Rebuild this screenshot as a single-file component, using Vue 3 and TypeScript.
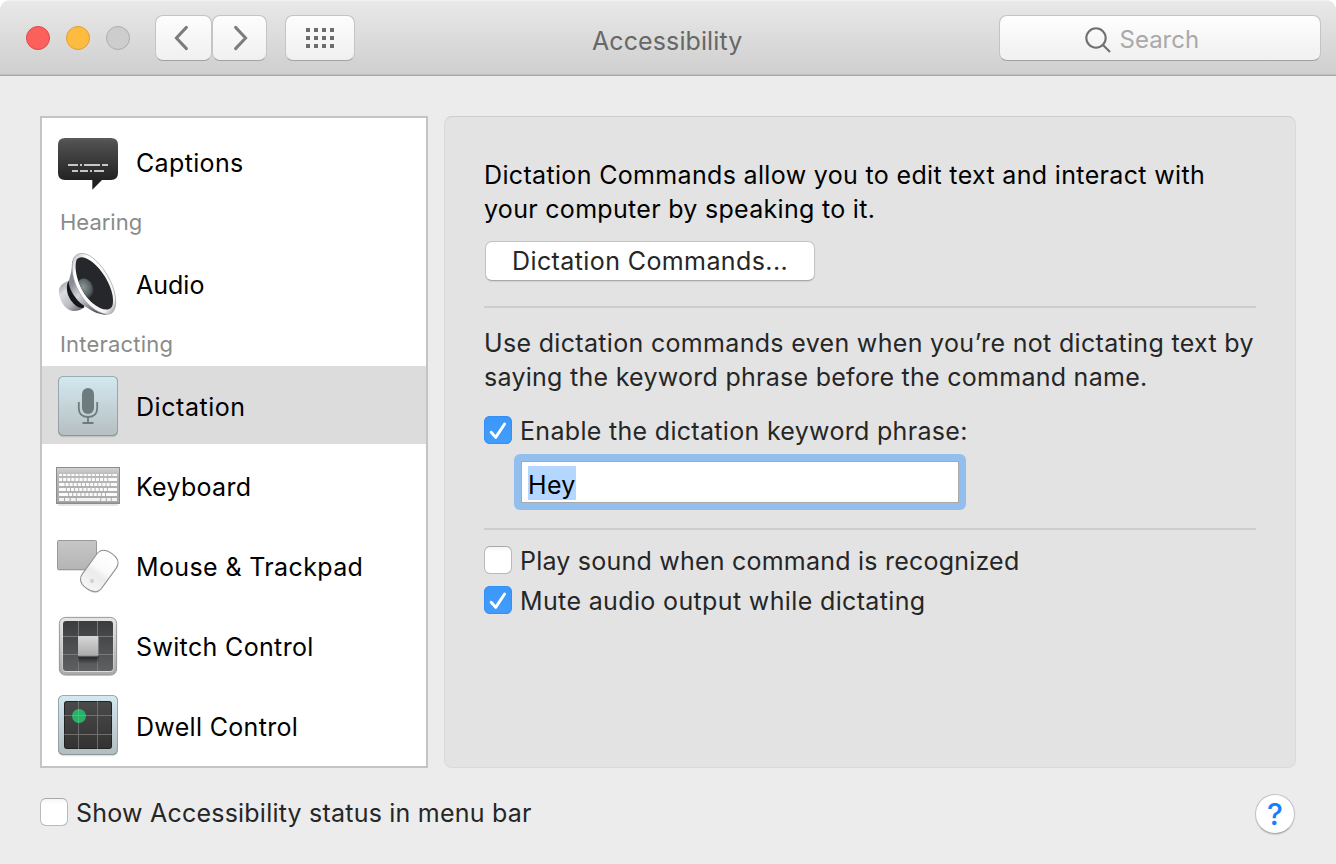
<script setup lang="ts">
import { ref } from 'vue'

interface SidebarRow {
  id: string
  label: string
  header?: boolean
}

const rows: SidebarRow[] = [
  { id: 'captions', label: 'Captions' },
  { id: 'hearing', label: 'Hearing', header: true },
  { id: 'audio', label: 'Audio' },
  { id: 'interacting', label: 'Interacting', header: true },
  { id: 'dictation', label: 'Dictation' },
  { id: 'keyboard', label: 'Keyboard' },
  { id: 'mouse', label: 'Mouse & Trackpad' },
  { id: 'switch', label: 'Switch Control' },
  { id: 'dwell', label: 'Dwell Control' },
]

const selected = ref('dictation')
const keywordEnabled = ref(true)
const playSound = ref(false)
const muteAudio = ref(true)
const showStatus = ref(false)

// Keyboard icon rows: lead widens the first key, the last key runs to the right edge
const keyRows = [
  { y: 28, h: 2, count: 14, lead: 0 },
  { y: 32, h: 3, count: 13, lead: 0 },
  { y: 37, h: 3, count: 13, lead: 2.4 },
  { y: 42, h: 3, count: 12, lead: 3.8 },
  { y: 47, h: 3, count: 11, lead: 6 },
]

const keys = keyRows.flatMap((r) => {
  const out: { x: number; y: number; w: number; h: number }[] = []
  let x = 3
  for (let i = 0; i < r.count; i++) {
    const w = i === 0 ? 3.1 + r.lead : i === r.count - 1 ? 61 - x : 3.1
    out.push({ x, y: r.y, w, h: r.h })
    x += w + 1
  }
  return out
})

const bottomKeys = [
  [3, 5], [9, 4.5], [14.7, 5], [20.7, 23.5], [45.2, 4.6], [50.8, 4], [55.8, 5.2],
].map(([x, w]) => ({ x, y: 52, w, h: 3 }))
</script>

<template>
  <div class="window">
    <header class="titlebar">
      <div class="lights">
        <span class="light red"></span>
        <span class="light yellow"></span>
        <span class="light gray"></span>
      </div>
      <div class="nav">
        <button class="tool back" aria-label="Back">
          <svg width="16" height="26" viewBox="0 0 16 26"><path d="M13.4 2.4 3.4 13l10 10.6" /></svg>
        </button>
        <button class="tool forward" aria-label="Forward">
          <svg width="16" height="26" viewBox="0 0 16 26"><path d="M2.6 2.4 12.6 13l-10 10.6" /></svg>
        </button>
      </div>
      <button class="tool all" aria-label="Show All">
        <svg width="28" height="20" viewBox="0 0 28 20">
          <template v-for="r in 3" :key="r">
            <rect v-for="c in 4" :key="c" :x="(c - 1) * 8" :y="(r - 1) * 8" width="4" height="4" />
          </template>
        </svg>
      </button>
      <h1 class="title">Accessibility</h1>
      <div class="search">
        <svg width="28" height="28" viewBox="0 0 28 28">
          <circle cx="12" cy="12" r="9.7" />
          <path d="M19 19l7 7" />
        </svg>
        <span>Search</span>
      </div>
    </header>

    <main class="body">
      <nav class="sidebar">
        <template v-for="row in rows" :key="row.id">
          <div v-if="row.header" class="group" :class="row.id">{{ row.label }}</div>
          <div v-else class="item" :class="[row.id, { selected: selected === row.id }]" @click="selected = row.id">
            <svg class="icon" width="64" height="78" viewBox="0 0 64 78">
              <g v-if="row.id === 'captions'">
                <defs>
                  <linearGradient id="cap" x1="0" y1="0" x2="0" y2="1">
                    <stop offset="0" stop-color="#5c5c5c" />
                    <stop offset="0.08" stop-color="#505050" />
                    <stop offset="0.8" stop-color="#232323" />
                    <stop offset="1" stop-color="#1b1b1b" />
                  </linearGradient>
                </defs>
                <path fill="url(#cap)" d="M9 16h46q7 0 7 7v28q0 7-7 7h-9L36.3 67.8V58H9q-7 0-7-7V23q0-7 7-7z" />
                <path
                  stroke="#c6c8c6" stroke-width="2" fill="none"
                  d="M12 43h10M24 43h2M28 43h16M46 43h6M16 49h6M24 49h8M34 49h2M38 49h10"
                />
              </g>
              <g v-else-if="row.id === 'audio'">
                <defs>
                  <linearGradient id="magnet" x1="0" y1="0" x2="0.7" y2="1">
                    <stop offset="0" stop-color="#8e8e96" />
                    <stop offset="0.35" stop-color="#dcdce2" />
                    <stop offset="0.75" stop-color="#b9b9c2" />
                    <stop offset="1" stop-color="#74747c" />
                  </linearGradient>
                  <linearGradient id="horn" x1="0.1" y1="0.4" x2="0.6" y2="1">
                    <stop offset="0" stop-color="#8a8a92" />
                    <stop offset="0.35" stop-color="#d4d4dc" />
                    <stop offset="0.65" stop-color="#a2a2ad" />
                    <stop offset="1" stop-color="#55555d" />
                  </linearGradient>
                  <linearGradient id="rim" x1="0" y1="0" x2="1" y2="1">
                    <stop offset="0" stop-color="#b8b8bd" />
                    <stop offset="0.2" stop-color="#ffffff" />
                    <stop offset="0.85" stop-color="#f4f4f6" />
                    <stop offset="1" stop-color="#8f8f95" />
                  </linearGradient>
                  <radialGradient id="dome" cx="0.45" cy="0.4" r="0.6">
                    <stop offset="0" stop-color="#8b9596" />
                    <stop offset="0.7" stop-color="#5b6365" />
                    <stop offset="1" stop-color="#34383b" />
                  </radialGradient>
                  <clipPath id="well">
                    <path d="M20.5 16C24 10.300 34 14 43 24.500C52 35 58.600 50 56.800 60C55.400 68 46 67 37 59.500C25 49.500 16.800 28 20.500 16z" />
                  </clipPath>
                </defs>
                <path fill="url(#magnet)" d="M13 36.800C6 39 2.500 43 3 48.500C3.600 56 8 64.500 15.500 66.800C20 67.700 25.500 66 28.500 63z" />
                <path fill="#17171a" d="M12.400 37C9.600 42 10.500 50 15 56.500C18.500 61.500 23 64.500 27.800 63.800L30 56L18 36z" />
                <path fill="url(#horn)" d="M16.500 17C16 26 14.500 31.500 12.600 37.500C13 46 20 56 27 61C34 66 41.500 70.500 50 70.800L54 66L24 20z" />
                <path
                  fill="url(#rim)" stroke="#8d8d94" stroke-width="0.6"
                  d="M17 16C19.500 8 28 8 34.500 12.300C47 20.500 60 41.500 59.700 58.500C59.300 69.800 53.500 72 45.500 69C26 61.500 12.500 34 17 16z"
                />
                <path fill="#26272a" d="M20.5 16C24 10.300 34 14 43 24.500C52 35 58.600 50 56.800 60C55.400 68 46 67 37 59.500C25 49.500 16.800 28 20.500 16z" />
                <g clip-path="url(#well)">
                  <ellipse cx="29" cy="44.5" rx="8.2" ry="10.200" transform="rotate(-24 29 44.5)" fill="url(#dome)" />
                </g>
              </g>
              <g v-else-if="row.id === 'dictation'">
                <defs>
                  <linearGradient id="dic" x1="0" y1="0" x2="0" y2="1">
                    <stop offset="0" stop-color="#d3e8f0" />
                    <stop offset="1" stop-color="#b6bfc1" />
                  </linearGradient>
                </defs>
                <rect x="2" y="11.3" width="60" height="60" rx="5.5" fill="#000" opacity="0.12" />
                <rect x="2" y="10" width="60" height="60" rx="5.5" fill="#8b979c" />
                <rect x="2.8" y="10.8" width="58.4" height="58.2" rx="4.8" fill="url(#dic)" />
                <rect x="26" y="22" width="12" height="26" rx="6" fill="#6e7b7e" />
                <path d="M22.8 36v6q0 9 9.2 9t9.2-9v-6M32 51v6M26.5 57h11" fill="none" stroke="#6e7b7e" stroke-width="1.8" />
              </g>
              <g v-else-if="row.id === 'keyboard'">
                <defs>
                  <linearGradient id="kbd" x1="0" y1="0" x2="0" y2="1">
                    <stop offset="0" stop-color="#d2d2d2" />
                    <stop offset="0.2" stop-color="#b9b9b9" />
                    <stop offset="1" stop-color="#a9a9a9" />
                  </linearGradient>
                </defs>
                <rect x="2" y="57" width="60" height="3" rx="1.5" fill="#000" opacity="0.1" />
                <rect x="0" y="21" width="64" height="37" fill="#8c8c8c" />
                <rect x="1" y="22" width="62" height="34.5" fill="url(#kbd)" />
                <rect v-for="(k, i) in keys" :key="i" :x="k.x" :y="k.y" :width="k.w" :height="k.h" fill="#fbfbfb" />
                <rect v-for="k in bottomKeys" :key="k.x" :x="k.x" :y="k.y" :width="k.w" :height="k.h" fill="#f3f3f3" />
              </g>
              <g v-else-if="row.id === 'mouse'">
                <defs>
                  <linearGradient id="pad" x1="0" y1="0" x2="0" y2="1">
                    <stop offset="0" stop-color="#c6c6c6" />
                    <stop offset="1" stop-color="#b5b5b5" />
                  </linearGradient>
                  <linearGradient id="mse" x1="0" y1="0" x2="0" y2="1">
                    <stop offset="0" stop-color="#ffffff" />
                    <stop offset="0.45" stop-color="#fafafa" />
                    <stop offset="0.6" stop-color="#ebebeb" />
                    <stop offset="1" stop-color="#f6f6f6" />
                  </linearGradient>
                </defs>
                <rect x="1.5" y="15" width="39.5" height="30" rx="1.2" fill="#000" opacity="0.12" />
                <rect x="1.5" y="14.5" width="39" height="29" rx="1" fill="url(#pad)" stroke="#999" />
                <g transform="rotate(36 43.3 45)">
                  <path d="M31.300 33Q31.300 23.500 43.300 23.500Q55.300 23.500 55.300 33V57Q55.300 66.500 43.300 66.500Q31.300 66.500 31.300 57z" transform="translate(0.8 1.2)" fill="#000" opacity="0.1" />
                  <path d="M31.300 33Q31.300 23.500 43.300 23.500Q55.300 23.500 55.300 33V57Q55.300 66.500 43.300 66.500Q31.300 66.500 31.300 57z" fill="url(#mse)" stroke="#8e8e8e" />
                </g>
                <ellipse cx="36" cy="55" rx="2" ry="2.2" fill="#d2d2d2" />
              </g>
              <g v-else-if="row.id === 'switch'">
                <defs>
                  <linearGradient id="swFrame" x1="0" y1="0" x2="0" y2="1">
                    <stop offset="0" stop-color="#e6e6e6" />
                    <stop offset="1" stop-color="#a9a9ab" />
                  </linearGradient>
                  <linearGradient id="swWell" x1="0" y1="0" x2="0" y2="1">
                    <stop offset="0" stop-color="#3b3c3e" />
                    <stop offset="1" stop-color="#5f6062" />
                  </linearGradient>
                  <linearGradient id="swKey" x1="0" y1="0" x2="0" y2="1">
                    <stop offset="0" stop-color="#d8d8d8" />
                    <stop offset="1" stop-color="#ababab" />
                  </linearGradient>
                  <linearGradient id="swShade" x1="0" y1="0" x2="0" y2="1">
                    <stop offset="0" stop-color="#000" stop-opacity="0.6" />
                    <stop offset="1" stop-color="#000" stop-opacity="0" />
                  </linearGradient>
                </defs>
                <rect x="3.4" y="11.4" width="57.2" height="57.7" rx="6" fill="url(#swFrame)" stroke="#8d8d8f" stroke-width="0.9" />
                <rect x="6.5" y="15" width="51" height="51" rx="3.5" fill="#efefef" opacity="0.7" />
                <rect x="7" y="15" width="50" height="50" rx="3" fill="url(#swWell)" />
                <path d="M22.5 15v50M41.5 15v50M7 30.5h50M7 48.5h50" stroke="#7d7e80" stroke-width="0.9" />
                <rect x="22" y="50" width="20.5" height="8" fill="url(#swShade)" />
                <rect x="22" y="30" width="20.3" height="20.5" rx="1.2" fill="#8b8b8b" />
                <rect x="22" y="30" width="20.3" height="19.5" rx="1.2" fill="url(#swKey)" />
              </g>
              <g v-else>
                <defs>
                  <linearGradient id="dwFrame" x1="0" y1="0" x2="0" y2="1">
                    <stop offset="0" stop-color="#d3e8f0" />
                    <stop offset="1" stop-color="#b3bdbf" />
                  </linearGradient>
                  <linearGradient id="dwWell" x1="0" y1="0" x2="0" y2="1">
                    <stop offset="0" stop-color="#4a4a4a" />
                    <stop offset="1" stop-color="#333333" />
                  </linearGradient>
                </defs>
                <rect x="2" y="10.3" width="60" height="60" rx="5.5" fill="#000" opacity="0.12" />
                <rect x="2" y="9" width="60" height="60" rx="5.5" fill="#8b979c" />
                <rect x="2.8" y="9.8" width="58.4" height="58.2" rx="4.8" fill="url(#dwFrame)" />
                <rect x="8" y="15" width="48" height="48" rx="3" fill="#222" />
                <rect x="9" y="16" width="46" height="46" rx="2.5" fill="url(#dwWell)" />
                <path d="M22.5 15v48M41.5 15v48M8 29.5h48M8 48.5h48" stroke="#747474" stroke-width="0.9" />
                <circle cx="23" cy="30" r="7" fill="#27b96b" opacity="0.92" />
                <path d="M22.5 23v14M16 29.5h14" stroke="#3cc97c" stroke-width="0.9" />
              </g>
            </svg>
            <span class="label">{{ row.label }}</span>
          </div>
        </template>
      </nav>

      <section class="panel">
        <p class="intro">
          <span class="l1">Dictation Commands allow you to edit text and interact with</span>
          <span class="l2">your computer by speaking to it.</span>
        </p>
        <button class="push">Dictation Commands...</button>
        <hr />
        <p class="hint">
          <span class="l3">Use dictation commands even when you’re not dictating text by</span>
          <span class="l4">saying the keyword phrase before the command name.</span>
        </p>
        <div class="check enable" @click="keywordEnabled = !keywordEnabled">
          <span class="box" :class="{ on: keywordEnabled }">
            <svg v-if="keywordEnabled" width="28" height="28" viewBox="0 0 28 28"><path d="M7.2 16.2 11.7 21.4 20.6 8" /></svg>
          </span>
          <span class="text">Enable the dictation keyword phrase:</span>
        </div>
        <div class="focus">
          <div class="field"><span class="selection">Hey</span></div>
        </div>
        <hr class="second" />
        <div class="check play" @click="playSound = !playSound">
          <span class="box" :class="{ on: playSound }">
            <svg v-if="playSound" width="28" height="28" viewBox="0 0 28 28"><path d="M7.2 16.2 11.7 21.4 20.6 8" /></svg>
          </span>
          <span class="text">Play sound when command is recognized</span>
        </div>
        <div class="check mute" @click="muteAudio = !muteAudio">
          <span class="box" :class="{ on: muteAudio }">
            <svg v-if="muteAudio" width="28" height="28" viewBox="0 0 28 28"><path d="M7.2 16.2 11.7 21.4 20.6 8" /></svg>
          </span>
          <span class="text">Mute audio output while dictating</span>
        </div>
      </section>
    </main>

    <footer class="bottom">
      <div class="check status" @click="showStatus = !showStatus">
        <span class="box" :class="{ on: showStatus }">
          <svg v-if="showStatus" width="28" height="28" viewBox="0 0 28 28"><path d="M7.2 16.2 11.7 21.4 20.6 8" /></svg>
        </span>
        <span class="text">Show Accessibility status in menu bar</span>
      </div>
      <button class="help" aria-label="Help">?</button>
    </footer>
  </div>
</template>

<style>
body {
  margin: 0;
  background: #fff;
}
</style>

<style scoped>
.window {
  box-sizing: border-box;
  width: 1336px;
  height: 864px;
  display: flex;
  flex-direction: column;
  overflow: hidden;
  border-radius: 10px 10px 0 0;
  background: #ececec;
  font-family: Inter, "Liberation Sans", sans-serif;
  font-size: 25px;
  color: #262626;
  white-space: nowrap;
  cursor: default;
}

button {
  box-sizing: border-box;
  margin: 0;
  padding: 0;
  border: 0;
  font: inherit;
  color: inherit;
}

/* Title bar */
.titlebar {
  box-sizing: border-box;
  flex: none;
  height: 76px;
  padding: 15px 15px 0 26px;
  display: flex;
  align-items: flex-start;
  background: linear-gradient(#f5f5f5 0, #e8e8e8 2px, #cfcfcf 74px);
  box-shadow: inset 0 -1px #a9a8a9, inset 0 -2px #bfbebf;
}

.lights {
  display: flex;
  gap: 16px;
  margin-top: 11px;
}

.light {
  box-sizing: border-box;
  width: 24px;
  height: 24px;
  border-radius: 50%;
  border: 1px solid;
}

.red { background: #fc605c; border-color: #df4845; }
.yellow { background: #fdbc40; border-color: #de9f34; }
.gray { background: #cdcdcd; border-color: #adadad; }

.nav {
  display: flex;
  margin-left: 25px;
}

.tool {
  height: 46px;
  display: flex;
  align-items: center;
  justify-content: center;
  border: 1px solid #c4c4c4;
  border-bottom-color: #a3a3a3;
  border-radius: 8px;
  background: linear-gradient(#fdfdfd, #f0f0f0);
}

.tool.back { width: 57px; padding-right: 6px; }
.tool.forward { width: 55px; padding-left: 3px; }
.tool.all { width: 70px; margin-left: 18px; }

.tool path {
  fill: none;
  stroke: #7c7c7c;
  stroke-width: 3;
  stroke-linecap: round;
}

.tool rect { fill: #6c6c6c; }

.title {
  width: 152px;
  margin: 10px 0 0 237px;
  font-size: 25px;
  font-weight: 400;
  line-height: 32px;
  letter-spacing: 0.1px;
  color: #676767;
}

.search {
  box-sizing: border-box;
  width: 322px;
  height: 46px;
  margin-left: auto;
  padding-left: 84px;
  display: flex;
  align-items: center;
  border: 1px solid #c4c4c4;
  border-bottom-color: #a0a0a0;
  border-radius: 8px;
  background: linear-gradient(#fefefe, #f0f0f0);
}

.search svg { margin-top: 3px; }

.search circle,
.search path {
  fill: none;
  stroke: #707070;
  stroke-width: 2.1;
}

.search span {
  margin-left: 7.5px;
  margin-top: 3px;
  font-size: 24px;
  line-height: 32px;
  color: #a9a9a9;
}

/* Body */
.body {
  flex: none;
  height: 652px;
  margin: 40px 40px 0;
  display: flex;
  gap: 16px;
}

.sidebar {
  box-sizing: border-box;
  width: 388px;
  padding-top: 4px;
  border: 2px solid #c4c4c4;
  background: #fff;
  display: flex;
  flex-direction: column;
  gap: 2px;
}

.item {
  height: 78px;
  flex: none;
  display: flex;
  align-items: center;
  padding-left: 14px;
  color: #000;
}

.item.selected { background: #dcdcdc; }
.icon { flex: none; }

.label {
  margin-left: 16px;
  margin-top: 4px;
  line-height: 34px;
}

.group {
  flex: none;
  height: 40px;
  padding-left: 18px;
  font-size: 22px;
  line-height: 40px;
  color: #8a8a8a;
}

.hearing { letter-spacing: 0; }
.interacting { letter-spacing: 0.2px; }
.captions { letter-spacing: 0.35px; }
.audio { letter-spacing: 0; }
.dictation { letter-spacing: 0.55px; }
.keyboard { letter-spacing: 0.3px; }
.mouse { letter-spacing: 0.37px; }
.switch { letter-spacing: 0.35px; }
.dwell { letter-spacing: 0.32px; }

/* Settings panel */
.panel {
  box-sizing: border-box;
  width: 852px;
  padding: 41px 39px 0;
  border: 1px solid #d9d9d9;
  border-top-color: #cdcdcd;
  border-radius: 8px;
  background: #e3e3e3;
}

.panel p {
  margin: 0;
  line-height: 34px;
}

.panel p span { display: block; }
.intro { color: #000; }
.l1 { letter-spacing: 0.34px; }
.l2 { letter-spacing: 0.3px; }
.l3 { letter-spacing: 0.322px; }
.l4 { letter-spacing: 0.271px; }

.push {
  display: block;
  width: 330px;
  height: 40px;
  margin: 15px 0 0 1px;
  padding-left: 26px;
  text-align: left;
  border: 1px solid #c3c3c3;
  border-bottom-color: #a9a9a9;
  border-radius: 7px;
  background: #fff;
  box-shadow: 0 1px 1px rgba(0, 0, 0, 0.08);
  line-height: 39px;
  letter-spacing: 0.4px;
}

hr {
  height: 2px;
  margin: 25px 0 18px;
  border: 0;
  background: #cdcdcd;
}

hr.second { margin: 18px 0 16px; }

.check {
  display: flex;
  align-items: flex-start;
  height: 28px;
}

.check .text {
  margin-left: 8px;
  line-height: 30px;
}

.box {
  box-sizing: border-box;
  flex: none;
  width: 28px;
  height: 28px;
  border: 1px solid #bababa;
  border-top-color: #a9a9a9;
  border-radius: 6px;
  background: linear-gradient(#f5f5f5, #fff 5px);
}

.box.on {
  border: 0;
  background: linear-gradient(#3b97fa, #429cfb);
  box-shadow: inset 0 0 0 1px #3490f5;
}

.box svg { display: block; }

.box path {
  fill: none;
  stroke: #fff;
  stroke-width: 2.9;
  stroke-linecap: round;
  stroke-linejoin: round;
}

.enable { margin-top: 22px; letter-spacing: 0.31px; }
.play { letter-spacing: 0.22px; }
.mute { margin-top: 12px; letter-spacing: 0.36px; }
.status { letter-spacing: 0.22px; }

.focus {
  box-sizing: border-box;
  width: 452px;
  height: 56px;
  margin: 10px 0 0 30px;
  padding: 7px;
  border-radius: 6px;
  background: #93bfee;
}

.field {
  box-sizing: border-box;
  height: 42px;
  padding: 4px 0 0 6px;
  border: 1px solid #a9a9a9;
  background: #fff;
  color: #000;
}

.selection {
  box-sizing: border-box;
  display: block;
  width: 48px;
  height: 34px;
  line-height: 38px;
  letter-spacing: 0.3px;
  background: #b3d7ff;
}

/* Bottom bar */
.bottom {
  display: flex;
  justify-content: space-between;
  align-items: flex-start;
  padding: 30px 41px 0 40px;
}

.help {
  width: 40px;
  height: 40px;
  margin-top: -4px;
  border: 1px solid #c3c3c3;
  border-bottom-color: #ababab;
  border-radius: 50%;
  background: #fff;
  box-shadow: 0 1px 1px rgba(0, 0, 0, 0.12);
  font-size: 30px;
  font-weight: 500;
  line-height: 38px;
  text-align: center;
  color: #147efb;
}
</style>
